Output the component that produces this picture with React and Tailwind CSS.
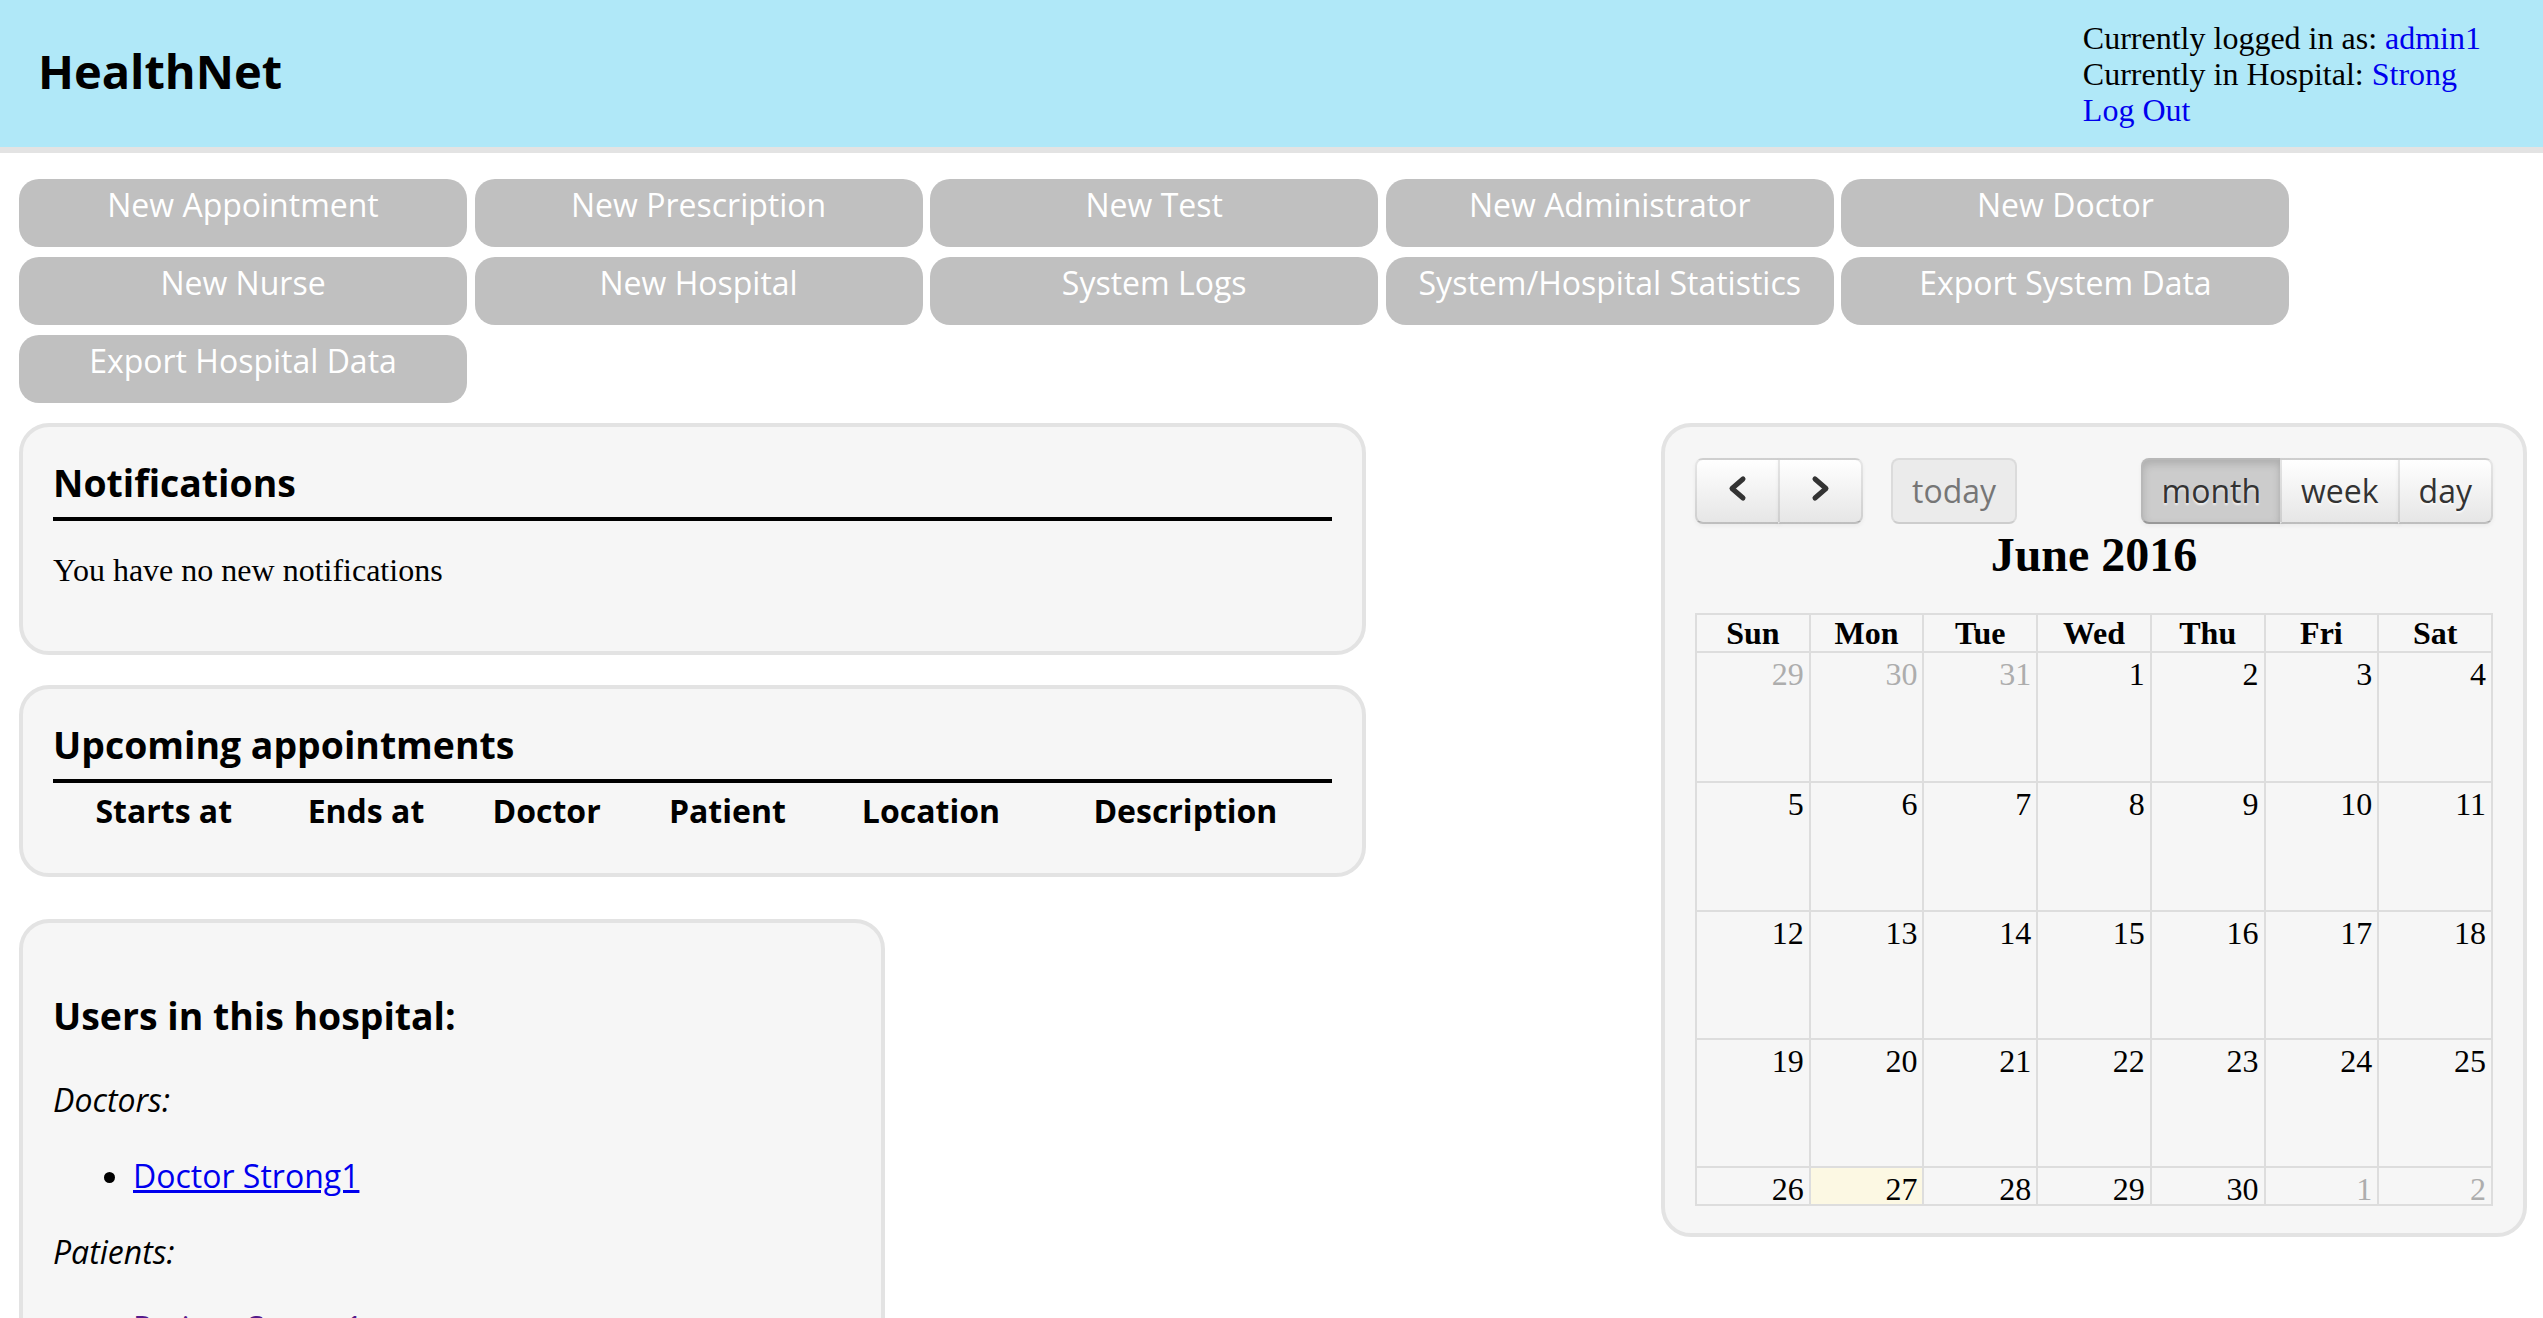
import React from 'react';

const sans = "font-['Open_Sans',sans-serif]";
const serif = "font-['Liberation_Serif','Times_New_Roman',serif]";

const actions = [
  'New Appointment',
  'New Prescription',
  'New Test',
  'New Administrator',
  'New Doctor',
  'New Nurse',
  'New Hospital',
  'System Logs',
  'System/Hospital Statistics',
  'Export System Data',
  'Export Hospital Data',
];

const columns = ['Starts at', 'Ends at', 'Doctor', 'Patient', 'Location', 'Description'];

const days = ['Sun', 'Mon', 'Tue', 'Wed', 'Thu', 'Fri', 'Sat'];

// [day, outside current month, today]
const weeks = [
  { h: 'h-[130px]', cell: 'pt-[3px] leading-[36px]', cells: [[29, 1], [30, 1], [31, 1], [1], [2], [3], [4]] },
  { h: 'h-[129px]', cell: 'pt-[3px] leading-[36px]', cells: [[5], [6], [7], [8], [9], [10], [11]] },
  { h: 'h-[128px]', cell: 'pt-[3px] leading-[36px]', cells: [[12], [13], [14], [15], [16], [17], [18]] },
  { h: 'h-[128px]', cell: 'pt-[3px] leading-[36px]', cells: [[19], [20], [21], [22], [23], [24], [25]] },
  { h: 'h-[38px]', cell: 'pt-[6px] leading-[30px]', cells: [[26], [27, 0, 1], [28], [29], [30], [1, 1], [2, 1]] },
];

const fcBtn =
  "h-[66px] flex items-center justify-center border-2 border-black/10 border-b-black/25 text-[32px] leading-[44px] text-[#333] bg-linear-to-b from-white to-[#e6e6e6] shadow-[inset_0_2px_0_rgba(255,255,255,0.2),0_2px_4px_rgba(0,0,0,0.05)] [text-shadow:0_2px_2px_rgba(255,255,255,0.75)] font-['Open_Sans',sans-serif]";

function Chevron({ dir }) {
  const pts = dir === 'left' ? '16,4 5,13.5 16,23' : '5,4 16,13.5 5,23';
  return (
    <svg width="21" height="27" viewBox="0 0 21 27" className="-mt-[5px]">
      <polyline
        points={pts}
        fill="none"
        stroke="#333"
        strokeWidth="5"
        strokeLinecap="round"
        strokeLinejoin="round"
      />
    </svg>
  );
}

function Panel({ className = '', children }) {
  return (
    <div
      className={`border-4 border-[#e3e3e3] rounded-[30px] bg-[#f6f6f6] px-[30px] pt-[30px] ${className}`}
    >
      {children}
    </div>
  );
}

function Calendar() {
  return (
    <div className="w-[866px] border-4 border-[#e3e3e3] rounded-[30px] bg-[#f6f6f6] px-[30px] pt-[31px] pb-[27px]">
      <div className="flex justify-between">
        <div className="flex">
          <div className="flex">
            <button className={`${fcBtn} w-[85px] rounded-l-[8px]`}>
              <Chevron dir="left" />
            </button>
            <button className={`${fcBtn} w-[85px] -ml-[2px] rounded-r-[8px]`}>
              <Chevron dir="right" />
            </button>
          </div>
          <button className="ml-[28px] h-[66px] px-[19px] flex items-center border-2 border-black/10 border-b-black/20 rounded-[8px] bg-[#e6e6e6] text-[32px] leading-[44px] text-[#333] opacity-65 font-['Open_Sans',sans-serif]">
            today
          </button>
        </div>
        <div className="flex">
          <button className="h-[66px] px-[19px] flex items-center border-2 border-black/10 border-b-black/25 rounded-l-[8px] bg-[#cccccc] text-[32px] leading-[44px] text-[#333] shadow-[inset_0_4px_8px_rgba(0,0,0,0.15),0_2px_4px_rgba(0,0,0,0.05)] [text-shadow:0_2px_2px_rgba(255,255,255,0.75)] font-['Open_Sans',sans-serif]">
            month
          </button>
          <button className={`${fcBtn} -ml-[2px] px-[19px]`}>week</button>
          <button className={`${fcBtn} -ml-[2px] px-[19px] rounded-r-[8px]`}>day</button>
        </div>
      </div>

      <h2 className={`${serif} mt-[3px] text-center text-[48px] leading-[55px] font-bold text-black`}>
        June 2016
      </h2>

      <div className={`${serif} mt-[31px] border-t-2 border-l-2 border-[#dddddd]`}>
        <div className="grid grid-cols-7 h-[38px]">
          {days.map((d) => (
            <div
              key={d}
              className="border-r-2 border-b-2 border-[#dddddd] text-center text-[32px] leading-[36px] font-bold text-black"
            >
              {d}
            </div>
          ))}
        </div>
        {weeks.map((w, wi) => (
          <div key={wi} className={`grid grid-cols-7 ${w.h}`}>
            {w.cells.map(([n, other, today], ci) => (
              <div
                key={ci}
                className={`border-r-2 border-b-2 border-[#dddddd] pr-[5px] text-right text-[32px] ${w.cell} ${
                  today ? 'bg-[#fcf8e3]' : ''
                } ${other ? 'text-[#adadad]' : 'text-black'}`}
              >
                {n}
              </div>
            ))}
          </div>
        ))}
      </div>
    </div>
  );
}

export default function App() {
  return (
    <div className={`${serif} min-h-screen bg-white text-black`}>
      <header className="h-[153px] bg-[#b0e8f8] border-b-[6px] border-[#e3e3e3] flex items-center justify-between pl-[38px] pr-[62px]">
        <h1 className={`${sans} mb-[5px] text-[47px] leading-[65px] font-bold text-black`}>HealthNet</h1>
        <div className="text-[32px] leading-[36px] mt-[1px]">
          <div>
            Currently logged in as: <a className="text-[#0000ee]">admin1</a>
          </div>
          <div>
            Currently in Hospital: <a className="text-[#0000ee]">Strong</a>
          </div>
          <div>
            <a className="text-[#0000ee]">Log Out</a>
          </div>
        </div>
      </header>

      <nav className="pl-[19px] pt-[26px] w-[2300px] flex flex-wrap gap-x-[7.6px] gap-y-[10px]">
        {actions.map((a) => (
          <button
            key={a}
            className={`${sans} w-[448px] h-[68px] pt-[4px] rounded-[20px] bg-[#c0c0c0] text-white text-[32px] leading-[44px] text-center flex justify-center items-start`}
          >
            {a}
          </button>
        ))}
      </nav>

      <main className="mt-[20px] pl-[19px] pr-[16px] flex justify-between items-start">
        <div className="w-[1347px] flex flex-col">
          <Panel className="h-[232px]">
            <h3 className={`${sans} text-[37.4px] leading-[51px] font-bold`}>Notifications</h3>
            <div className="mt-[9px] h-[4px] bg-black" />
            <p className="mt-[31px] text-[32px] leading-[37px]">You have no new notifications</p>
          </Panel>

          <Panel className="mt-[30px] h-[192px]">
            <h3 className={`${sans} text-[37.4px] leading-[51px] font-bold`}>Upcoming appointments</h3>
            <div className="mt-[9px] h-[4px] bg-black" />
            <table className="w-full border-separate border-spacing-[4px]">
              <thead>
                <tr>
                  {columns.map((c) => (
                    <th key={c} className={`${sans} p-[2px] text-[32px] leading-[44px] font-bold text-center`}>
                      {c}
                    </th>
                  ))}
                </tr>
              </thead>
            </table>
          </Panel>

          <div className="mt-[42px] w-[866px] border-4 border-[#e3e3e3] rounded-[30px] bg-[#f6f6f6] px-[30px] pt-[30px] pb-[40px]">
            <h3 className={`${sans} mt-[37px] mb-[37px] text-[37.4px] leading-[51px] font-bold`}>
              Users in this hospital:
            </h3>
            <div className={`${sans} text-[32px] leading-[44px]`}>
              <p className="italic">Doctors:</p>
              <ul className="mt-[32px] pl-[80px] list-disc">
                <li>
                  <a className="text-[#0000ee] underline">Doctor Strong1</a>
                </li>
              </ul>
              <p className="mt-[32px] italic">Patients:</p>
              <ul className="mt-[32px] pl-[80px] list-disc">
                <li>
                  <a className="text-[#551a8b] underline">Patient Strong1</a>
                </li>
              </ul>
            </div>
          </div>
        </div>

        <Calendar />
      </main>
    </div>
  );
}
